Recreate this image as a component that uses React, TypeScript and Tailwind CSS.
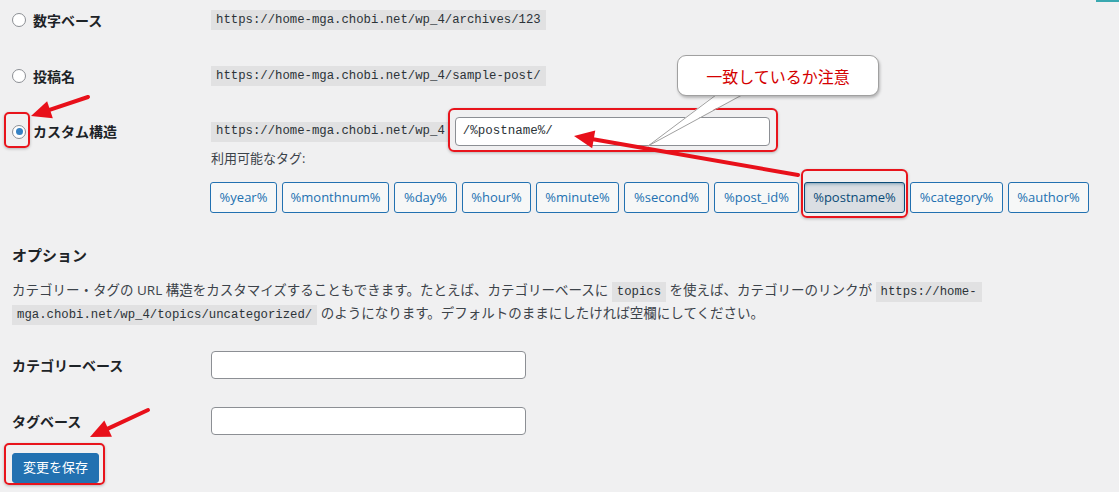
import React from "react";

const tags = [
  { label: "%year%", w: "w-[67px]" },
  { label: "%monthnum%", w: "w-[107px]" },
  { label: "%day%", w: "w-[63px]" },
  { label: "%hour%", w: "w-[69px]" },
  { label: "%minute%", w: "w-[83px]" },
  { label: "%second%", w: "w-[85px]" },
  { label: "%post_id%", w: "w-[85px]" },
  { label: "%postname%", w: "w-[101px]", active: true },
  { label: "%category%", w: "w-[93px]" },
  { label: "%author%", w: "w-[81px]" },
];

function Radio({ checked }: { checked?: boolean }) {
  return (
    <span className="flex items-center justify-center w-[14px] h-[14px] rounded-full border border-[#8c8f94] bg-white shrink-0">
      {checked && <span className="w-[7px] h-[7px] rounded-full bg-[#3582c4]" />}
    </span>
  );
}

function Code({ children }: { children: React.ReactNode }) {
  return (
    <code className="bg-[#e1e1e2] px-[5px] h-[20px] inline-flex items-center text-[12.3px] text-[#2c3338] font-['Liberation_Mono',monospace] whitespace-nowrap">
      {children}
    </code>
  );
}

// arrow: line from tail to the base of the head, head ending at tip
function Arrow({ x1, y1, x2, y2 }: { x1: number; y1: number; x2: number; y2: number }) {
  const dx = x2 - x1;
  const dy = y2 - y1;
  const len = Math.hypot(dx, dy);
  const ux = dx / len;
  const uy = dy / len;
  const head = 20;
  const half = 9;
  const bx = x2 - ux * head;
  const by = y2 - uy * head;
  const pts = `${x2},${y2} ${bx - uy * half},${by + ux * half} ${bx + uy * half},${by - ux * half}`;
  return (
    <g>
      <line x1={x1} y1={y1} x2={bx + ux * 2} y2={by + uy * 2} stroke="#e8101a" strokeWidth={4} strokeLinecap="round" />
      <polygon points={pts} fill="#e8101a" />
    </g>
  );
}

export default function App() {
  return (
    <div className="relative w-[1119px] h-[492px] overflow-hidden bg-[#f0f0f1] text-[#1d2327] font-['Open_Sans','Noto_Sans_CJK_JP',sans-serif]">
      <div className="flex flex-col">
        {/* permalink choices */}
        <div className="flex items-center h-[20px] mt-[10px]">
          <div className="w-[211px] shrink-0 flex items-center gap-[7px] pl-[12px] text-[14px] font-semibold">
            <Radio />
            数字ベース
          </div>
          <Code>https://home-mga.chobi.net/wp_4/archives/123</Code>
        </div>

        <div className="flex items-center h-[20px] mt-[36px]">
          <div className="w-[211px] shrink-0 flex items-center gap-[7px] pl-[12px] text-[14px] font-semibold">
            <Radio />
            投稿名
          </div>
          <Code>https://home-mga.chobi.net/wp_4/sample-post/</Code>
        </div>

        <div className="flex items-center h-[29px] mt-[31px]">
          <div className="w-[211px] shrink-0 flex items-center gap-[7px] pl-[12px] text-[14px] font-semibold">
            <Radio checked />
            カスタム構造
          </div>
          <Code>https://home-mga.chobi.net/wp_4</Code>
          <div className="ml-[5px] w-[315px] h-[29px] bg-white border border-[#8c8f94] rounded-[4px] flex items-center px-[7px] text-[12.5px] text-[#2c3338] font-['Liberation_Mono',monospace]">
            /%postname%/
          </div>
        </div>

        <div className="ml-[211px] mt-[5px] h-[16px] flex items-center text-[13px] text-[#3c434a]">
          利用可能なタグ:
        </div>

        <div className="ml-[210px] mt-[15px] flex gap-[5px]">
          {tags.map((t) =>
            t.active ? (
              <button
                key={t.label}
                className={`${t.w} h-[31px] rounded-[3px] border border-[#0a4b78] bg-[#dadee3] text-[#0a4b78] text-[13px] shadow-[inset_0_2px_5px_-3px_#0a4b78]`}
              >
                {t.label}
              </button>
            ) : (
              <button
                key={t.label}
                className={`${t.w} h-[31px] rounded-[3px] border border-[#2271b1] bg-[#f6f7f7] text-[#2271b1] text-[13px]`}
              >
                {t.label}
              </button>
            )
          )}
        </div>

        {/* options */}
        <h2 className="pl-[12px] mt-[32px] h-[20px] flex items-center text-[15px] font-bold">オプション</h2>
        <p className="pl-[12px] mt-[14px] text-[13.5px] leading-[22px] text-[#3c434a]">
          カテゴリー・タグの URL 構造をカスタマイズすることもできます。たとえば、カテゴリーベースに <Code>topics</Code> を使えば、カテゴリーのリンクが{" "}
          <Code>https://home-</Code>
          <br />
          <Code>mga.chobi.net/wp_4/topics/uncategorized/</Code> のようになります。デフォルトのままにしたければ空欄にしてください。
        </p>

        <div className="flex items-center h-[28px] mt-[26px]">
          <div className="w-[211px] shrink-0 pl-[12px] text-[14px] font-semibold">カテゴリーベース</div>
          <div className="w-[315px] h-[28px] bg-white border border-[#8c8f94] rounded-[4px]" />
        </div>

        <div className="flex items-center h-[28px] mt-[28px]">
          <div className="w-[211px] shrink-0 pl-[12px] text-[14px] font-semibold">タグベース</div>
          <div className="w-[315px] h-[28px] bg-white border border-[#8c8f94] rounded-[4px]" />
        </div>

        <div className="pl-[12px] mt-[18px]">
          <button className="w-[87px] h-[30px] rounded-[3px] bg-[#2271b1] border border-[#2271b1] text-white text-[13px]">
            変更を保存
          </button>
        </div>
      </div>

      {/* annotations */}
      <div className="absolute right-0 top-0 w-[23px] h-[2px] bg-[#3aa8b0]" />

      <div className="absolute left-[4px] top-[112px] w-[26px] h-[36px] rounded-[5px] border-2 border-[#e8141c] shadow-[0_1px_3px_rgba(0,0,0,0.25)]" />
      <div className="absolute left-[448px] top-[108px] w-[330px] h-[44px] rounded-[6px] border-2 border-[#e8141c] shadow-[0_1px_3px_rgba(0,0,0,0.25)]" />
      <div className="absolute left-[801px] top-[169px] w-[107px] h-[49px] rounded-[6px] border-2 border-[#e8141c] shadow-[0_1px_3px_rgba(0,0,0,0.25)]" />
      <div className="absolute left-[4px] top-[443px] w-[101px] h-[42px] rounded-[5px] border-2 border-[#e8141c] shadow-[0_1px_3px_rgba(0,0,0,0.25)]" />

      <svg className="absolute inset-0 pointer-events-none" width={1119} height={492}>
        <polygon points="716,94 742,94 648,146" fill="#ffffff" />
        <polyline points="716,95 648,146 742,95" fill="none" stroke="#a0a0a0" strokeWidth={1} />
        <Arrow x1={88} y1={97} x2={31} y2={116} />
        <Arrow x1={798} y1={175} x2={574} y2={136} />
        <Arrow x1={148} y1={410} x2={90} y2={437} />
      </svg>

      <div className="absolute left-[677px] top-[55px] w-[202px] h-[41px] rounded-[9px] bg-white border border-[#a0a0a0] shadow-[1px_2px_3px_rgba(0,0,0,0.25)] flex items-center justify-center text-[16px] text-[#d40000] font-['Noto_Sans_CJK_JP',sans-serif]">
        一致しているか注意
      </div>
    </div>
  );
}
